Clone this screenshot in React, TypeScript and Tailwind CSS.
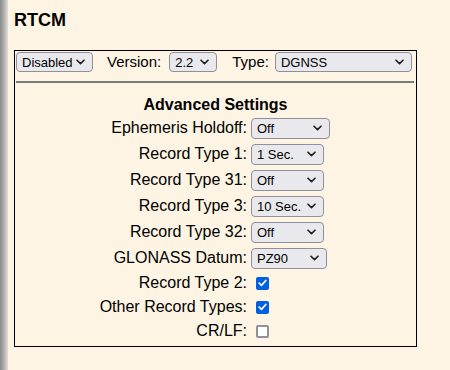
import React from "react";

function Chevron() {
  return (
    <svg width="9" height="6" viewBox="0 0 9 6" className="shrink-0">
      <path d="M1 1.2l3.5 3.4 3.5-3.4" fill="none" stroke="#1f1f1f" strokeWidth="1.6" strokeLinecap="round" strokeLinejoin="round" />
    </svg>
  );
}

function Sel({ text, w, h = 21, cls = "" }: { text: string; w: number; h?: number; cls?: string }) {
  return (
    <div
      className={`flex items-center justify-between shrink-0 border border-[#8f8f9d] rounded-[4px] bg-[#e9e9ed] pl-[5px] pr-[7px] text-[13px] text-black leading-none ${cls}`}
      style={{ width: w, height: h }}
    >
      <span>{text}</span>
      <Chevron />
    </div>
  );
}

function Check({ checked }: { checked: boolean }) {
  if (checked) {
    return (
      <div className="w-[13px] h-[13px] ml-[5px] rounded-[2px] bg-[#0060df] flex items-center justify-center">
        <svg width="9" height="8" viewBox="0 0 9 8">
          <path d="M1.2 4.2l2.3 2.2L7.8 1.5" fill="none" stroke="#fff" strokeWidth="1.7" strokeLinecap="round" strokeLinejoin="round" />
        </svg>
      </div>
    );
  }
  return <div className="w-[13px] h-[13px] ml-[5px] rounded-[2px] border-2 border-[#8f8f9d] bg-white" />;
}

function SelRow({ label, text, w }: { label: string; text: string; w: number }) {
  return (
    <div className="flex items-center h-[26px]">
      <div className="w-[236px] pr-[4px] text-right text-[16px] leading-[18px]">{label}</div>
      <Sel text={text} w={w} />
    </div>
  );
}

function CheckRow({ label, checked }: { label: string; checked: boolean }) {
  return (
    <div className="flex items-center h-[24px]">
      <div className="w-[236px] pr-[4px] text-right text-[16px] leading-[18px]">{label}</div>
      <Check checked={checked} />
    </div>
  );
}

export default function App() {
  return (
    <div className="w-[450px] h-[370px] flex bg-[#fdf4e3] text-black font-['Liberation_Sans',Arial,sans-serif]">
      <div className="w-[8px] shrink-0 bg-gradient-to-r from-[#8a8a8a] via-[#b0b0b0] to-[#e4dfd4]" />
      <div className="pl-[6px]">
        <h1 className="mt-[9px] text-[18px] font-bold leading-[22px]">RTCM</h1>
        <div className="mt-[19px] w-[403px] h-[297px] border border-black">
          <div className="flex items-center h-[20px] mt-[1px] ml-[1px]">
            <Sel text="Disabled" w={77} h={20} />
            <span className="ml-[14px] text-[15px] leading-[18px]">Version:</span>
            <Sel text="2.2" w={48} h={20} cls="ml-[8px]" />
            <span className="ml-[15px] text-[15px] leading-[18px]">Type:</span>
            <Sel text="DGNSS" w={137} h={20} cls="ml-[6px]" />
          </div>
          <div className="mt-[9px] ml-[1px] mr-[2px] h-[2px] bg-[#7a7a7a]" />
          <div className="mt-[12px] h-[19px] text-center text-[16px] font-bold leading-[19px]">Advanced Settings</div>
          <div className="mt-[1px]">
            <SelRow label="Ephemeris Holdoff:" text="Off" w={79} />
            <SelRow label="Record Type 1:" text="1 Sec." w={73} />
            <SelRow label="Record Type 31:" text="Off" w={73} />
            <SelRow label="Record Type 3:" text="10 Sec." w={73} />
            <SelRow label="Record Type 32:" text="Off" w={73} />
            <SelRow label="GLONASS Datum:" text="PZ90" w={76} />
            <CheckRow label="Record Type 2:" checked />
            <CheckRow label="Other Record Types:" checked />
            <CheckRow label="CR/LF:" checked={false} />
          </div>
        </div>
      </div>
    </div>
  );
}
